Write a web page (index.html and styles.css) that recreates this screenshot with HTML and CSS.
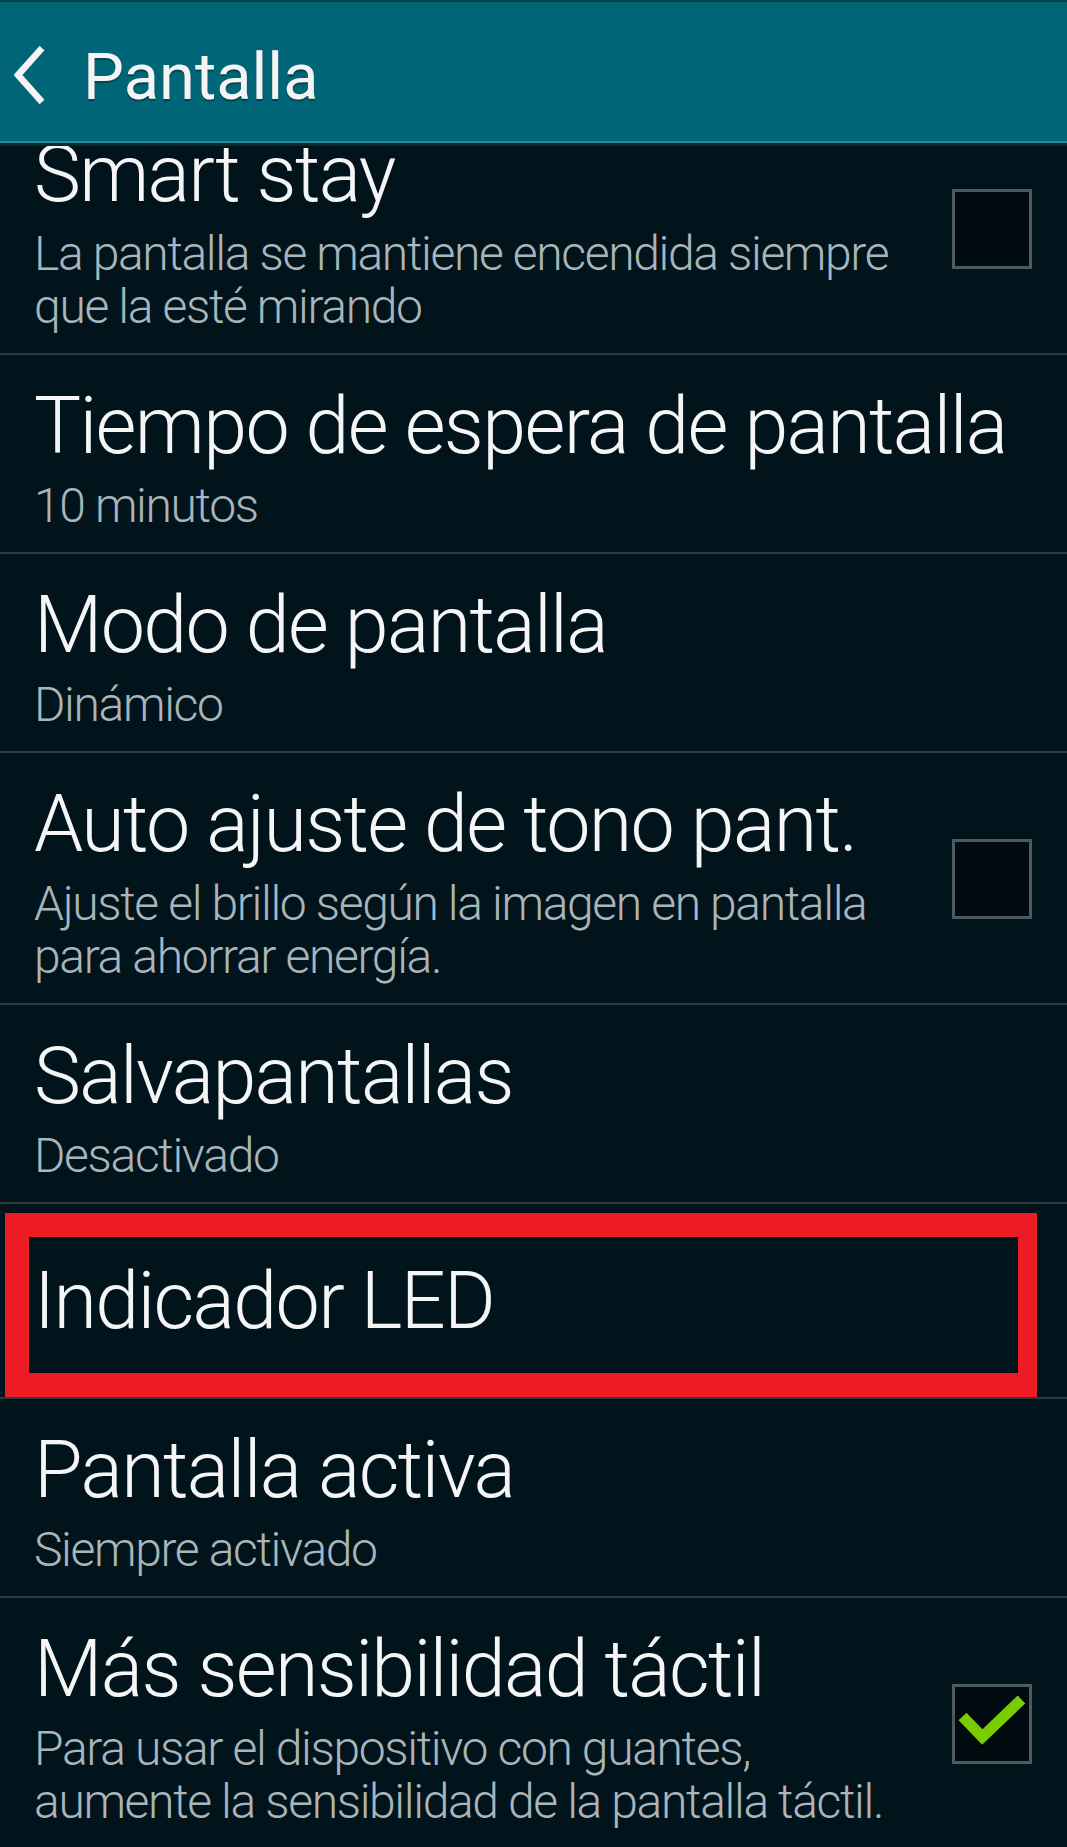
FILE: index.html
```html
<!DOCTYPE html>
<html lang="es">
<head>
<meta charset="utf-8">
<title>Pantalla</title>
<link rel="stylesheet" href="styles.css">
</head>
<body>
<div class="screen">
  <header class="appbar">
    <svg class="back" width="34" height="60" viewBox="0 0 34 60" aria-hidden="true">
      <polyline points="28,2 4,29 28,56" fill="none" stroke="#f4f4f4" stroke-width="6.5" stroke-linejoin="miter"/>
    </svg>
    <h1 class="appbar-title">Pantalla</h1>
  </header>

  <div class="list">
    <div class="list-inner">
      <div class="row">
        <div class="text">
          <div class="title">Smart stay</div>
          <div class="sub">La pantalla se mantiene encendida siempre<br>que la esté mirando</div>
        </div>
        <div class="check"></div>
      </div>

      <div class="row">
        <div class="text">
          <div class="title">Tiempo de espera de pantalla</div>
          <div class="sub">10 minutos</div>
        </div>
      </div>

      <div class="row">
        <div class="text">
          <div class="title">Modo de pantalla</div>
          <div class="sub">Dinámico</div>
        </div>
      </div>

      <div class="row">
        <div class="text">
          <div class="title">Auto ajuste de tono pant.</div>
          <div class="sub">Ajuste el brillo según la imagen en pantalla<br>para ahorrar energía.</div>
        </div>
        <div class="check"></div>
      </div>

      <div class="row">
        <div class="text">
          <div class="title">Salvapantallas</div>
          <div class="sub">Desactivado</div>
        </div>
      </div>

      <div class="row row-single">
        <div class="text">
          <div class="title">Indicador LED</div>
        </div>
        <div class="highlight"></div>
      </div>

      <div class="row">
        <div class="text">
          <div class="title">Pantalla activa</div>
          <div class="sub">Siempre activado</div>
        </div>
      </div>

      <div class="row">
        <div class="text">
          <div class="title">Más sensibilidad táctil</div>
          <div class="sub">Para usar el dispositivo con guantes,<br>aumente la sensibilidad de la pantalla táctil.</div>
        </div>
        <div class="check is-checked">
          <svg width="74" height="74" viewBox="3 3 74 74" aria-hidden="true">
            <polyline points="11,35.5 30.5,56 70,18.5" fill="none" stroke="#000000" stroke-opacity="0.8" stroke-width="11"/>
            <polyline points="10.5,32.5 30.3,53 69.5,15.5" fill="none" stroke="#78cc00" stroke-width="11"/>
          </svg>
        </div>
      </div>
    </div>
  </div>
</div>
</body>
</html>
```
FILE: styles.css
```css
html, body {
  margin: 0;
  padding: 0;
}

body {
  background: #01141c;
  font-family: Roboto, "Noto Sans", "Liberation Sans", sans-serif;
  color: #f4f4f4;
}

.screen {
  width: 1067px;
  height: 1847px;
  display: flex;
  flex-direction: column;
  overflow: hidden;
}

/* top bar */
.appbar {
  flex: none;
  box-sizing: border-box;
  height: 146px;
  display: flex;
  align-items: flex-start;
  background: #006677;
  border-top: 2px solid #02424d;
  border-bottom: 3px solid #0a2a32;
  box-shadow: inset 0 -2px 0 #2e8a97;
}

.back {
  flex: none;
  margin: 44px 0 0 14px;
}

.appbar-title {
  margin: 43px 0 0 35px;
  font-size: 65px;
  line-height: 65px;
  font-weight: 400;
  color: #f4f4f4;
  text-shadow: 0 2px 1px rgba(0, 0, 0, 0.35);
}

/* settings list */
.list {
  flex: 1;
  overflow: hidden;
}

.list-inner {
  margin-top: -43px;
}

.row {
  position: relative;
  display: flex;
  align-items: center;
  box-sizing: border-box;
  padding: 30.5px 35px 20px 34px;
  border-bottom: 2px solid #2b3a40;
}

.text {
  flex: 1;
  min-width: 0;
}

.title {
  font-size: 79px;
  line-height: 80px;
  font-weight: 300;
  letter-spacing: -1.65px;
  color: #f5f5f5;
  white-space: nowrap;
}

.sub {
  margin-top: 13.5px;
  font-size: 48px;
  line-height: 53px;
  font-weight: 300;
  letter-spacing: -1.35px;
  color: #a9b5ba;
  white-space: nowrap;
}

.row-single {
  height: 195px;
  padding-top: 0;
  padding-bottom: 0;
}

/* checkboxes */
.check {
  flex: none;
  box-sizing: border-box;
  width: 80px;
  height: 80px;
  margin-top: -9px;
  border: 3px solid #4a5a60;
  background: #000b0f;
  display: flex;
}

.check svg {
  display: block;
}

/* red marker drawn over the LED row */
.highlight {
  position: absolute;
  left: 5px;
  top: 9px;
  box-sizing: border-box;
  width: 1032px;
  height: 184px;
  border: 24px solid #ed1c24;
  border-right-width: 19px;
  pointer-events: none;
}
```
